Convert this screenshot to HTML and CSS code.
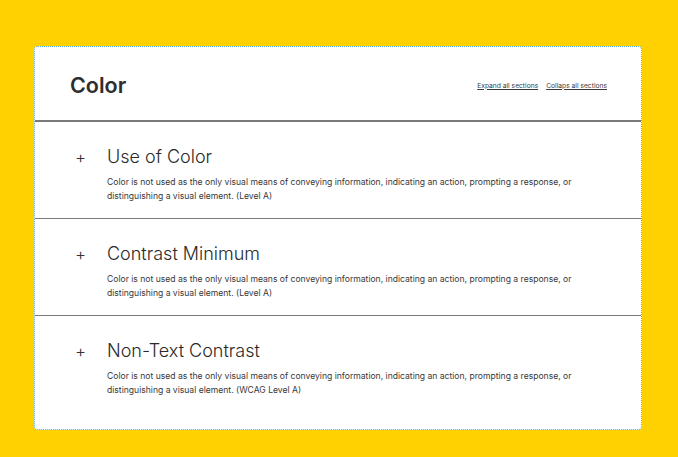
FILE: index.html
```html
<!DOCTYPE html>
<html>
<head>
<meta charset="utf-8">
<link rel="stylesheet" href="styles.css">
</head>
<body>
<div class="card">
  <header class="head">
    <h1 class="title">Color</h1>
    <div class="links">
      <a href="#">Expand all sections</a>
      <a href="#">Collaps all sections</a>
    </div>
  </header>
  <section class="item">
    <span class="plus">+</span>
    <div class="body">
      <h2 class="item-title">Use of Color</h2>
      <p class="desc">Color is not used as the only visual means of conveying information, indicating an action, prompting a response, or distinguishing a visual element. (Level A)</p>
    </div>
  </section>
  <section class="item">
    <span class="plus">+</span>
    <div class="body">
      <h2 class="item-title">Contrast Minimum</h2>
      <p class="desc">Color is not used as the only visual means of conveying information, indicating an action, prompting a response, or distinguishing a visual element. (Level A)</p>
    </div>
  </section>
  <section class="item last">
    <span class="plus">+</span>
    <div class="body">
      <h2 class="item-title">Non-Text Contrast</h2>
      <p class="desc">Color is not used as the only visual means of conveying information, indicating an action, prompting a response, or distinguishing a visual element. (WCAG Level A)</p>
    </div>
  </section>
</div>
</body>
</html>
```
FILE: styles.css
```css
* { box-sizing: border-box; }
html, body { margin: 0; }
body {
  background: #ffd100;
  padding: 46px 36px 27px 34px;
  font-family: Inter, "Noto Sans", sans-serif;
  color: #2b2b2b;
}
.card {
  background: #fff;
  border: 1px dotted #4aa8d8;
  border-radius: 4px;
  width: 608px;
  height: 384px;
}
.head {
  display: flex;
  align-items: center;
  justify-content: space-between;
  height: 75px;
  padding: 0 34px 0 35px;
  border-bottom: 2px solid #7a7a7a;
}
.title {
  margin: 0;
  font-size: 21.5px;
  font-weight: 600;
  color: #2e2e2e;
  padding-top: 2px;
}
.links {
  display: flex;
  gap: 8px;
  font-size: 6.7px;
  padding-top: 4px;
}
.links a {
  color: #3a3a3a;
  text-decoration: underline;
}
.item {
  display: flex;
  padding: 24px 30px 15px 40px;
  border-bottom: 1px solid #7a7a7a;
}
.item.last { border-bottom: none; }
.plus {
  width: 32px;
  font-size: 17px;
  font-weight: 300;
  line-height: 22px;
  color: #333;
}
.item-title {
  margin: 0;
  font-size: 18px;
  font-weight: 300;
  line-height: 22px;
  color: #2a2a2a;
}
.desc {
  margin: 7px 0 0;
  font-size: 8.58px;
  line-height: 14px;
  color: #383838;
  max-width: 480px;
}
```
